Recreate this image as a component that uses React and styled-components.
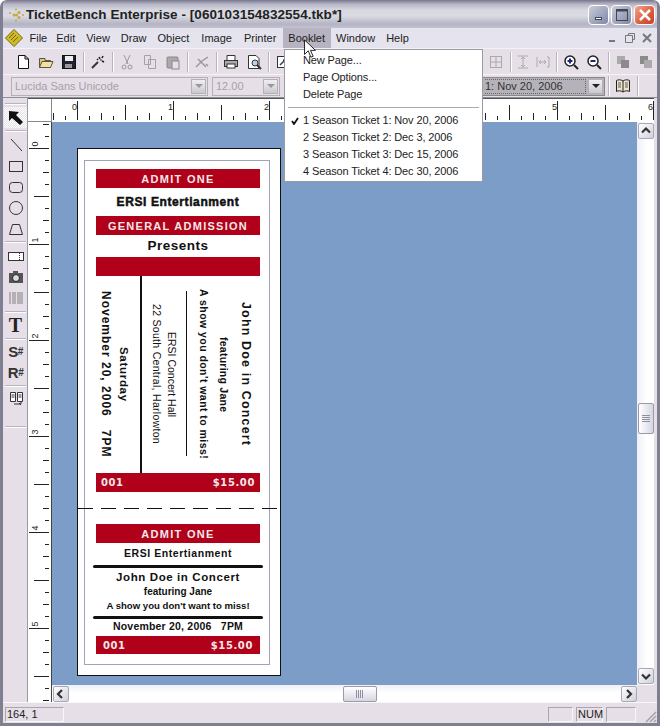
import React from "react";
import styled, { createGlobalStyle } from "styled-components";

const Global = createGlobalStyle`
  html, body { margin: 0; padding: 0; background: #fff; }
  #root { width: 660px; height: 726px; overflow: hidden; }
`;
const UI = `"Liberation Sans", Arial, sans-serif`;

const Win = styled.div`
  width: 660px; height: 726px; box-sizing: border-box; position: relative;
  background: #e7dfe7; border: 3px solid #7f7f92; border-top: 0; border-radius: 7px 7px 0 0;
  display: flex; flex-direction: column; font-family: ${UI}; overflow: hidden;
`;
const Title = styled.div`
  height: 28px; flex: none; display: flex; align-items: center; padding: 2px 2px 0 3px; box-sizing: border-box;
  background: linear-gradient(#75758c 0, #b4b4c4 4px, #d8d8e2 10px, #dadae2 16px, #b4b4c4 24px, #c2c2d0 28px);
`;
const TitleText = styled.div`font: bold 13.5px/18px "Liberation Sans", sans-serif; letter-spacing: .05px; color: #222; margin-left: 0; flex: 1; white-space: nowrap;`;
const CapBtn = styled.div`
  width: 21px; height: 20px; box-sizing: border-box; margin-left: 2px; border: 1px solid #fff; border-radius: 4px;
  background: ${p => p.$close ? "linear-gradient(135deg,#f0a890,#dc5a3e 60%,#c8402a)" : "linear-gradient(135deg,#c8ccda,#8088a6)"};
  display: flex; align-items: center; justify-content: center;
`;
const MenuBar = styled.div`
  height: 21px; flex: none; display: flex; align-items: center; background: #e5e4ee; font-size: 11px; color: #222; padding-left: 1px;
  border-bottom: 1px solid #f4f2f6; box-sizing: border-box;
`;
const MenuItem = styled.div`
  padding: 0 5.5px; height: 20px; line-height: 20px; margin-right: ${p => p.$gap || 0}px;
  background: ${p => p.$on ? "#b7b3c0" : "transparent"};
`;
const MdiBtns = styled.div`margin-left: auto; display: flex; gap: 0; padding-right: 2px; align-items: center;`;
const Bar = styled.div`
  flex: none; height: ${p => p.$h}px; display: flex; align-items: center; background: #e7dfe7; box-sizing: border-box; padding-left: ${p => p.$pl || 4}px;
  border-bottom: 1px solid ${p => p.$line || "#f6f2f6"};
`;
const ToolIcon = styled.div`
  width: ${p => p.$w || 23}px; height: 22px; display: flex; align-items: center; justify-content: center; flex: none;
`;
const Sep = styled.div`width: 1px; height: 20px; background: #b9b4bb; margin: 0 2px 0 3px; flex: none; box-shadow: 1px 0 0 #fff;`;
const Spacer = styled.div`flex: ${p => p.$w ? "none" : 1}; width: ${p => p.$w || 0}px;`;
const Combo = styled.div`
  width: ${p => p.$w}px; height: 19px; box-sizing: border-box; border: 1px solid ${p => p.$active ? "#888" : "#b5b0b7"};
  background: ${p => p.$active ? "#b5b2ba" : "#e7dfe7"}; margin-right: ${p => p.$mr || 0}px; flex: none;
  display: flex; align-items: center; font-size: 11px; color: ${p => p.$active ? "#333" : "#a5a1a8"}; padding-left: ${p => p.$pl || 3}px; overflow: hidden; white-space: nowrap;
  justify-content: space-between;
`;
const FocusText = styled.div`flex: 1; height: 15px; line-height: 13px; box-sizing: border-box; border: 1px dotted #666; border-left: 0; margin-right: 2px;`;
const ComboArrow = styled.div`
  width: 15px; height: 15px; flex: none; margin-right: 1px; background: linear-gradient(#f0eef2,#cbc8d0); border: 1px solid #b5b0b7; box-sizing: border-box;
  display: flex; align-items: center; justify-content: center;
  &::after { content: ""; border: 4px solid transparent; border-top: 4px solid ${p => p.$dark ? "#222" : "#999"}; border-bottom: 0; }
`;
const Body = styled.div`flex: 1; display: flex; min-height: 0;`;
const ToolCol = styled.div`
  width: 25px; flex: none; padding: 1px 0 0 1px; display: flex; flex-direction: column; align-items: center; background: #e7dfe7;
  border-right: 1px solid #9a9aa4; box-sizing: border-box;
`;
const VTool = styled.div`
  width: 23px; height: ${p => p.$h || 21}px; flex: none; display: flex; align-items: center; justify-content: center;
  background: ${p => p.$on ? "repeating-conic-gradient(#fff 0 25%, #e5e1e7 0 50%) 0 0/2px 2px" : "none"};
`;
const HSep = styled.div`height: 1px; width: 21px; background: #b9b4bb; box-shadow: 0 1px 0 #fff; margin: ${p => p.$m || "3px"} 0; flex: none;`;
const GlyphT = styled.span`font: bold 20px/22px "Liberation Serif", serif; color: #222;`;
const GlyphS = styled.span`font: bold 15px/18px "Liberation Sans", sans-serif; color: #333; letter-spacing: -.5px; & > small { font-size: 10px; vertical-align: 2px; }`;
const Main = styled.div`flex: 1; display: flex; flex-direction: column; min-width: 0;`;
const RulerRow = styled.div`height: 24px; width: 626px; flex: none; display: flex; background: #fff; border-top: 1px solid #555; box-sizing: border-box;`;
const Corner = styled.div`width: 24px; flex: none; background: #fff; border-right: 1px solid #888; border-bottom: 1px solid #888; box-sizing: border-box;`;
const Work = styled.div`flex: 1; display: flex; min-height: 0;`;
const VRuler = styled.div`width: 24px; flex: none; box-sizing: border-box; background: #fff; border-right: 1px solid #444; overflow: hidden;`;
const View = styled.div`width: 602px; flex: none; display: flex; flex-direction: column;`;
const ViewTop = styled.div`flex: 1; display: flex; min-height: 0;`;
const Canvas = styled.div`
  width: 585px; flex: none; background: #7c9dc8; padding: 26px 0 0 25px; box-sizing: border-box; overflow: hidden;
`;
const VScroll = styled.div`
  width: 17px; flex: none; background: linear-gradient(90deg,#eef0f6,#fff 60%); padding-left: 1px; box-sizing: border-box; position: relative; display: flex; flex-direction: column; justify-content: space-between;
  padding-top: 1px; padding-bottom: 1px;
`;
const ScrollBtn = styled.div`
  width: 16px; height: 16px; box-sizing: border-box; flex: none; border: 1px solid #a9a9b6; border-radius: 2px;
  background: linear-gradient(135deg,#fff,#cfd0dc); display: flex; align-items: center; justify-content: center;
`;
const VThumb = styled.div`
  position: absolute; left: 1px; top: 281px; width: 16px; height: 31px; box-sizing: border-box; border: 1px solid #9a9aa8; border-radius: 2px;
  background: linear-gradient(90deg,#fff,#d5d6e2); display: flex; align-items: center; justify-content: center;
`;
const HThumb = styled(VThumb)`
  left: 291px; top: 1px; width: 34px; height: 16px; background: linear-gradient(#fff,#d5d6e2);
`;
const HScrollArea = styled.div`
  height: 17px; width: 585px; flex: none; padding: 1px 0 0 1px; box-sizing: border-box; background: linear-gradient(#eef0f6,#fff 45%); position: relative; display: flex; justify-content: space-between;
`;
const Status = styled.div`
  height: 21px; flex: none; border-top: 1px solid #f8f6f8; box-sizing: border-box; background: #e7dfe7; display: flex; align-items: center; padding: 2px 0 0 2px; font-size: 11px; color: #222; position: relative;
`;
const Pane = styled.div`
  height: 15px; box-sizing: border-box; width: ${p => p.$w}px; border: 1px solid; border-color: #a9a6ac #f8f6f8 #f8f6f8 #a9a6ac; line-height: 13px; padding-left: 1px; margin-left: ${p => p.$ml || 0}px; flex: none;
`;
const Resize = styled.svg`position: absolute; right: 0; bottom: 0;`;
const Dropdown = styled.div`
  position: absolute; left: 281px; top: 49px; width: 199px; height: 133px; box-sizing: border-box; background: #fff; border: 1px solid #9a9aa2; z-index: 3; font-size: 11px;
  color: #222; padding-top: 2px; letter-spacing: -.12px;
`;
const DItem = styled.div`height: 17px; line-height: 17px; padding-left: 18px; position: relative; white-space: nowrap;`;
const Check = styled.svg`position: absolute; left: 6px; top: 5px;`;
const DSep = styled.div`height: 1px; background: #aaa; margin: 4px 3px 4px;`;
const Cursor = styled.svg`position: absolute; left: 300px; top: 39px; z-index: 4;`;

const Ticket = styled.div`
  width: 204px; height: 528px; box-sizing: border-box; background: #fff; border: 1px solid #111; padding: 11px 0 0 6px; position: relative;
`;
const Inner = styled.div`
  width: 186px; height: 505px; box-sizing: border-box; border: 1px solid #a0a4b8; padding: 8px 9px 0 11px; display: flex; flex-direction: column; font-family: "Liberation Sans", sans-serif;
`;
const Red = styled.div`
  height: ${p => p.$h || 19}px; flex: none; background: #b10019; color: #f3e9ea; font-weight: bold; font-size: ${p => p.$fs || 11}px; letter-spacing: ${p => p.$ls || 1.3}px; text-align: center; line-height: ${p => (p.$h || 19) + 1}px;
  display: ${p => p.$split ? "flex" : "block"}; justify-content: space-between; padding: 0 ${p => p.$split ? p.$pad || 5 : 0}px; box-sizing: border-box; font-family: ${p => p.$split ? `"DejaVu Sans", sans-serif` : `"Liberation Sans", sans-serif`};
`;
const Line = styled.div`
  text-align: center; font-weight: bold; font-size: ${p => p.$fs}px; line-height: ${p => p.$lh}px; height: ${p => p.$lh}px; letter-spacing: ${p => p.$ls || 0}px; color: #111; flex: none; white-space: nowrap;
  -webkit-text-stroke: ${p => p.$heavy ? ".5px #111" : "0"};
`;
const Stub = styled.div`height: 197px; flex: none; display: flex; align-items: stretch;`;
const Vertical = styled.div`
  writing-mode: vertical-rl; flex: none; margin-left: ${p => p.$ml || 0}px; width: 16px; text-align: center; white-space: nowrap; color: #111;
  font-size: ${p => p.$fs}px; font-weight: ${p => p.$w || "bold"}; letter-spacing: ${p => p.$ls || 0}px; line-height: 16px;
`;
const StubLine = styled.div`flex: none; margin: ${p => p.$inset || 0}px 0 ${p => p.$inset2 || 0}px ${p => p.$ml}px; width: ${p => p.$w}px; background: #111;`;
const Dashed = styled.div`
  position: absolute; left: 0; top: 359px; width: 202px; height: 1px; background: repeating-linear-gradient(90deg,#111 0 15px,transparent 15px 23px); z-index: 2;
`;
const Gap = styled.div`height: ${p => p.$h}px; flex: none;`;
const Rule = styled.div`height: 3px; background: #111; margin: ${p => p.$m}; flex: none; border-radius: 2px;`;

const P = ({ w = 16, h = 16, children }) => <svg width={w} height={h} viewBox={`0 0 ${w} ${h}`}>{children}</svg>;

const HRuler = () => {
  const t = [];
  for (let i = -2; i < 49; i++) {
    const x = 25.5 + i * 12;
    const n = ((i % 8) + 8) % 8;
    const y1 = n === 0 ? 2 : n === 4 ? 6 : n % 2 === 0 ? 14 : 17;
    t.push(<line key={i} x1={x} x2={x} y1={y1} y2={21} stroke="#222" />);
    if (n === 0) t.push(<text key={"t" + i} x={x - 5.5} y={11} fontSize="9" fontFamily="Liberation Sans" fill="#222">{i / 8}</text>);
  }
  return <svg width="602" height="23" style={{ display: "block" }}>{t}</svg>;
};
const VRulerTicks = () => {
  const t = [];
  for (let i = -2; i < 48; i++) {
    const y = 26.5 + i * 12;
    const n = ((i % 8) + 8) % 8;
    const x1 = n === 0 ? 1 : n === 4 ? 6 : n % 2 === 0 ? 15 : 17;
    t.push(<line key={i} x1={x1} x2={21} y1={y} y2={y} stroke="#222" />);
    if (n === 0) t.push(<text key={"t" + i} transform={`translate(10,${y - 2}) rotate(-90)`} fontSize="9" fontFamily="Liberation Sans" fill="#222">{i / 8}</text>);
  }
  return <svg width="23" height="580" style={{ display: "block" }}>{t}</svg>;
};

const Chev = ({ d }) => {
  const paths = { l: "M7 2 L3 6 L7 10", r: "M4 2 L8 6 L4 10", u: "M2 7.5 L6 3.5 L10 7.5", d: "M2 4.5 L6 8.5 L10 4.5" };
  return <svg width="12" height="12"><path d={paths[d]} fill="none" stroke="#333" strokeWidth="2.2" /></svg>;
};
const Grip = ({ v }) => <svg width="10" height="10">{[1.5, 3.5, 5.5, 7.5].map(k => v
  ? <line key={k} x1="1" x2="9" y1={k} y2={k} stroke="#8f8f9d" />
  : <line key={k} y1="1" y2="9" x1={k} x2={k} stroke="#8f8f9d" />)}</svg>;

export default function App() {
  return (
    <Win>
      <Global />
      <Title>
        <svg width="20" height="18" viewBox="0 0 20 18"><g fill="#c9a640"><circle cx="8" cy="9" r="1.5"/><circle cx="13" cy="6.5" r="1.5"/><circle cx="13" cy="11.5" r="1.5"/><circle cx="10.5" cy="9" r="1.5"/><circle cx="4" cy="7" r="1"/><circle cx="17" cy="9" r="1"/><circle cx="10" cy="3.5" r="1"/><circle cx="10" cy="14.5" r="1"/></g></svg>
        <TitleText>TicketBench Enterprise - [060103154832554.tkb*]</TitleText>
        <CapBtn><svg width="12" height="12"><rect x="2.5" y="8.5" width="6" height="2" fill="#fff" stroke="#445" /></svg></CapBtn>
        <CapBtn><svg width="14" height="14"><rect x="1.5" y="1.5" width="11" height="11" fill="none" stroke="#445" /><rect x="1" y="1" width="12" height="2.5" fill="#445" /></svg></CapBtn>
        <CapBtn $close><svg width="14" height="14"><path d="M2 2 L12 12 M12 2 L2 12" stroke="#fff" strokeWidth="2.5" /></svg></CapBtn>
      </Title>
      <MenuBar>
        <svg width="20" height="20" viewBox="0 0 20 20"><path d="M1.5 10 L10 1.5 L18.5 10 L10 18.5 Z" fill="#d2ba24" stroke="#6c6a10"/><path d="M5 10 L10 5 M7 12 L12 7 M9 14 L14 9" stroke="#6c6a10"/></svg>
        <MenuItem $gap={-2}>File</MenuItem>
        <MenuItem>Edit</MenuItem>
        <MenuItem>View</MenuItem>
        <MenuItem>Draw</MenuItem>
        <MenuItem $gap={1}>Object</MenuItem>
        <MenuItem $gap={1}>Image</MenuItem>
        <MenuItem $gap={1}>Printer</MenuItem>
        <MenuItem $on>Booklet</MenuItem>
        <MenuItem>Window</MenuItem>
        <MenuItem>Help</MenuItem>
        <MdiBtns>
          <ToolIcon $w={17}><svg width="12" height="12"><rect x="2" y="8" width="6" height="2" fill="#777" /></svg></ToolIcon>
          <ToolIcon $w={17}><svg width="12" height="12"><path d="M4.5 3.5 V1.5 H10.5 V7.5 H8.5 M1.5 3.5 H8.5 V10.5 H1.5 Z" fill="none" stroke="#777" /></svg></ToolIcon>
          <ToolIcon $w={17}><svg width="12" height="12"><path d="M2 2 L10 10 M10 2 L2 10" stroke="#777" strokeWidth="2" /></svg></ToolIcon>
        </MdiBtns>
      </MenuBar>
      <Bar $h={26} $pl={8}>
        <ToolIcon><P><path d="M3.5 1.5 H10 L13.5 5 V14.5 H3.5 Z M10 1.5 V5 H13.5" fill="#fff" stroke="#111" /></P></ToolIcon>
        <ToolIcon><P><path d="M1.5 13.5 V4.5 H7 V6.5 H12.5 V13.5 Z" fill="#e6c860" stroke="#555" /><path d="M4 7.5 L15 7.5 L12.5 13.5 H1.5 Z" fill="#f4e29a" stroke="#555" /></P></ToolIcon>
        <ToolIcon><P><rect x="1.5" y="1.5" width="13" height="13" fill="#223" stroke="#111" /><rect x="4" y="2" width="8" height="5" fill="#eee" /><rect x="4" y="10" width="7" height="4" fill="#999" /></P></ToolIcon>
        <Sep />
        <ToolIcon><P><path d="M2 14 L8 8" stroke="#333" strokeWidth="2" /><path d="M9 3 L10 5 M13 2 L12 4 M14 8 L12 7 M7 5 L8 6" stroke="#222" strokeWidth="1.6" /><circle cx="11" cy="6" r="1" fill="#669" /></P></ToolIcon>
        <Sep />
        <ToolIcon><P><path d="M5 1 L9 10 M11 1 L7 10" stroke="#999" /><circle cx="5" cy="13" r="2" fill="none" stroke="#999" /><circle cx="11" cy="13" r="2" fill="none" stroke="#999" /></P></ToolIcon>
        <ToolIcon><P><path d="M2.5 1.5 H8.5 V10.5 H2.5 Z M6.5 5.5 H13.5 V14.5 H6.5 Z" fill="#e7dfe7" stroke="#a5a1a8" /></P></ToolIcon>
        <ToolIcon><P><rect x="2" y="3" width="11" height="11" rx="1" fill="#aaa" stroke="#888" /><rect x="7" y="7" width="7" height="8" fill="#e7dfe7" stroke="#888" /></P></ToolIcon>
        <Sep />
        <ToolIcon><P><path d="M2 13 L8 7 L14 3 M4 5 L12 13 M12 10 L14 12" stroke="#999" strokeWidth="1.5" fill="none" /></P></ToolIcon>
        <Sep />
        <ToolIcon><P><path d="M4 6 V1.5 H12 V6" fill="#fff" stroke="#333" /><rect x="1.5" y="6.5" width="13" height="6" fill="#aaa" stroke="#333" /><rect x="4" y="10" width="8" height="4" fill="#fff" stroke="#333" /></P></ToolIcon>
        <ToolIcon><P><path d="M2.5 1.5 H10 L13 4.5 V14.5 H2.5 Z" fill="#fff" stroke="#333" /><circle cx="9" cy="9" r="3" fill="#b8d0e8" stroke="#333" /><path d="M11 11 L15 15" stroke="#333" strokeWidth="2" /></P></ToolIcon>
        <Sep />
        <ToolIcon><P><rect x="2.5" y="2.5" width="11" height="11" fill="#fff" stroke="#333" /><path d="M5 11 L10 6 M8 6 H10 V8" stroke="#246" strokeWidth="1.5" fill="none" /></P></ToolIcon>
        <Spacer />
        <ToolIcon><P><rect x="2.5" y="2.5" width="11" height="11" fill="#e7dfe7" stroke="#aaa"/><path d="M2.5 8 H13.5 M8 2.5 V13.5" stroke="#aaa"/></P></ToolIcon>
        <Sep />
        <ToolIcon $w={20}><P><path d="M3 2 H13 M3 14 H13 M8 3 V13 M6 5 L8 3 L10 5 M6 11 L8 13 L10 11" stroke="#aaa" fill="none" /></P></ToolIcon>
        <ToolIcon $w={20}><P><path d="M2 3 V13 M14 3 V13 M14 3 H12 M14 13 H12 M4 8 H11 M6 6 L4 8 L6 10 M9 6 L11 8 L9 10" stroke="#aaa" fill="none" /></P></ToolIcon>
        <Sep />
        <ToolIcon><P><circle cx="7" cy="7" r="5" fill="#fff" stroke="#222" strokeWidth="1.5" /><path d="M4.5 7 H9.5 M7 4.5 V9.5" stroke="#228" strokeWidth="2" /><path d="M11 11 L15 15" stroke="#222" strokeWidth="2" /></P></ToolIcon>
        <ToolIcon><P><circle cx="7" cy="7" r="5" fill="#fff" stroke="#222" strokeWidth="1.5" /><path d="M4.5 7 H9.5" stroke="#228" strokeWidth="2" /><path d="M11 11 L15 15" stroke="#222" strokeWidth="2" /></P></ToolIcon>
        <Sep />
        <ToolIcon><P><rect x="2" y="2" width="8" height="8" fill="#aaa" /><rect x="6" y="6" width="8" height="8" fill="#8a8a8a" /></P></ToolIcon>
        <ToolIcon><P><rect x="2" y="2" width="8" height="8" fill="#8a8a8a" /><rect x="6" y="6" width="8" height="8" fill="#aaa" /></P></ToolIcon>
      </Bar>
      <Bar $h={23} $pl={8} $line="#8f8f98">
        <Combo $w={197} $mr={4}>Lucida Sans Unicode<ComboArrow /></Combo>
        <Combo $w={68}>12.00<ComboArrow /></Combo>
        <Spacer $w={150} />
        <Combo $w={175} $pl={54} $active><FocusText>1: Nov 20, 2006</FocusText><ComboArrow $dark /></Combo>
        <Sep />
        <ToolIcon><P><path d="M8 3 C6 1.5 3 1.5 1.5 2.5 V13.5 C3 12.5 6 12.5 8 14 C10 12.5 13 12.5 14.5 13.5 V2.5 C13 1.5 10 1.5 8 3 Z M8 3 V14" fill="#f0e4c0" stroke="#222" /><path d="M3 5 H6 M3 7 H6 M3 9 H6 M10 5 H13 M10 7 H13 M10 9 H13" stroke="#558" /></P></ToolIcon>
        <Sep />
      </Bar>
      <Body>
        <ToolCol>
          <HSep $m="4px 0 3px" />
          <VTool $on $h={21}><svg width="18" height="18"><path d="M2 2 L2 12 L5 9 L13 16 L16 13 L9 6 L12 3 Z" fill="#111" /></svg></VTool>
          <HSep $m="2px 0 3px" />
          <VTool><P><path d="M3 2 L14 14" stroke="#333" /></P></VTool>
          <VTool><P><rect x="1.5" y="3.5" width="13" height="10" fill="none" stroke="#333" /></P></VTool>
          <VTool><P><rect x="1.5" y="3.5" width="13" height="10" rx="3" fill="none" stroke="#333" /></P></VTool>
          <VTool><P><circle cx="8" cy="8" r="6.5" fill="none" stroke="#333" /></P></VTool>
          <VTool><P><path d="M4.5 3.5 H11.5 L14.5 13.5 H1.5 Z" fill="none" stroke="#333" /></P></VTool>
          <HSep $m="2px 0 3px" />
          <VTool><P><rect x="0.5" y="4.5" width="15" height="8" fill="#fff" stroke="#333" /><path d="M11.5 5 V12" stroke="#333" strokeDasharray="1 1" /></P></VTool>
          <VTool><P><rect x="1" y="4" width="14" height="10" fill="#555" /><rect x="5" y="2" width="5" height="3" fill="#555" /><circle cx="8" cy="9" r="3.5" fill="#ddd" stroke="#222" /></P></VTool>
          <VTool><P><path d="M2 2 V14 M5 2 V14 M7 2 V14 M10 2 V14 M12 2 V14 M14 2 V14" stroke="#999" strokeWidth="1.3" /></P></VTool>
          <HSep $m="3px 0 2px" />
          <VTool $h={22}><GlyphT>T</GlyphT></VTool>
          <HSep $m="2px 0 2px" />
          <VTool><GlyphS>S<small>#</small></GlyphS></VTool>
          <VTool><GlyphS>R<small>#</small></GlyphS></VTool>
          <HSep $m="2px 0 1px" />
          <VTool><P><path d="M2.5 2.5 H7.5 V11.5 H2.5 Z M9.5 2.5 H14.5 V11.5 H9.5 Z" fill="#fff" stroke="#333" /><path d="M3.5 5 H6.5 M3.5 7 H6.5 M10.5 5 H13.5 M10.5 7 H13.5 M6 14 H13 V12 M11 13 L13 15" stroke="#333" fill="none" /></P></VTool>
          <HSep $m="18px 0 0" />
        </ToolCol>
        <Main>
          <RulerRow>
            <Corner />
            <HRuler />
          </RulerRow>
          <Work>
            <VRuler><VRulerTicks /></VRuler>
            <View>
              <ViewTop>
                <Canvas>
                  <Ticket>
                    <Dashed />
                    <Inner>
                      <Red>ADMIT ONE</Red>
                      <Line $fs={12} $lh={28} $ls={0.6} $heavy>ERSI Entertianment</Line>
                      <Red $fs={11} $ls={1.27}>GENERAL ADMISSION</Red>
                      <Line $fs={13.5} $lh={22} $ls={0.5}>Presents</Line>
                      <Red />
                      <Stub>
                        <Vertical $ml={2} $fs={12} $ls={1}>November 20, 2006 &nbsp; 7PM</Vertical>
                        <Vertical $ml={2} $fs={11.5} $ls={0.7}>Saturday</Vertical>
                        <StubLine $ml={8} $w={2} />
                        <Vertical $ml={7} $fs={10.5} $w="normal" $ls={0.3}>22 South Central, Harlowton</Vertical>
                        <Vertical $ml={-1} $fs={10.5} $w="normal">ERSI Concert Hall</Vertical>
                        <StubLine $ml={6} $w={1} $inset={15} $inset2={17} />
                        <Vertical $ml={9} $fs={10.5} $ls={0.45}>A show you don't want to miss!</Vertical>
                        <Vertical $ml={4} $fs={10.5} $ls={0.25}>featuring Jane</Vertical>
                        <Vertical $ml={6} $fs={12.5} $ls={1.15}>John Doe in Concert</Vertical>
                      </Stub>
                      <Red $split $pad={5} $fs={10} $ls={0.6}><span>001</span><span>$15.00</span></Red>
                      <Gap $h={32} />
                      <Red>ADMIT ONE</Red>
                      <Line $fs={10.5} $lh={21} $ls={0.55}>ERSI Entertianment</Line>
                      <Rule $m="1px -3px 0" />
                      <Line $fs={11.5} $lh={18} $ls={0.6}>John Doe in Concert</Line>
                      <Line $fs={10} $lh={12}>featuring Jane</Line>
                      <Line $fs={9.6} $lh={16}>A show you don't want to miss!</Line>
                      <Rule $m="2px -3px 0" />
                      <Line $fs={10.5} $lh={15} $ls={0.2}>November 20, 2006 &nbsp; 7PM</Line>
                      <Gap $h={2} />
                      <Red $h={18} $split $pad={7} $fs={10} $ls={0.6}><span>001</span><span>$15.00</span></Red>
                    </Inner>
                  </Ticket>
                </Canvas>
                <VScroll>
                  <ScrollBtn><Chev d="u" /></ScrollBtn>
                  <VThumb><Grip v /></VThumb>
                  <ScrollBtn><Chev d="d" /></ScrollBtn>
                </VScroll>
              </ViewTop>
              <HScrollArea>
                <ScrollBtn><Chev d="l" /></ScrollBtn>
                <HThumb><Grip /></HThumb>
                <ScrollBtn><Chev d="r" /></ScrollBtn>
              </HScrollArea>
            </View>
          </Work>
        </Main>
      </Body>
      <Status>
        <Pane $w={59}>164, 1</Pane>
        <Pane $w={25} $ml={484} />
        <Pane $w={27} $ml={3}>NUM</Pane>
        <Pane $w={30} $ml={3} />
        <Resize width="14" height="14"><path d="M13 3 L3 13 M13 7 L7 13 M13 11 L11 13" stroke="#a5a1a8" strokeWidth="1.5" /></Resize>
      </Status>
      <Dropdown>
        <DItem>New Page...</DItem>
        <DItem>Page Options...</DItem>
        <DItem>Delete Page</DItem>
        <DSep />
        <DItem><Check width="8" height="8"><path d="M1 4 L3 7 L7 1" fill="none" stroke="#111" strokeWidth="1.8" /></Check>1 Season Ticket 1: Nov 20, 2006</DItem>
        <DItem>2 Season Ticket 2: Dec 3, 2006</DItem>
        <DItem>3 Season Ticket 3: Dec 15, 2006</DItem>
        <DItem>4 Season Ticket 4: Dec 30, 2006</DItem>
      </Dropdown>
      <Cursor width="14" height="20" viewBox="0 0 14 22"><path d="M1 1 V17 L5 13 L8 20 L10.5 19 L7.5 12.5 H13 Z" fill="#fff" stroke="#111" /></Cursor>
    </Win>
  );
}
